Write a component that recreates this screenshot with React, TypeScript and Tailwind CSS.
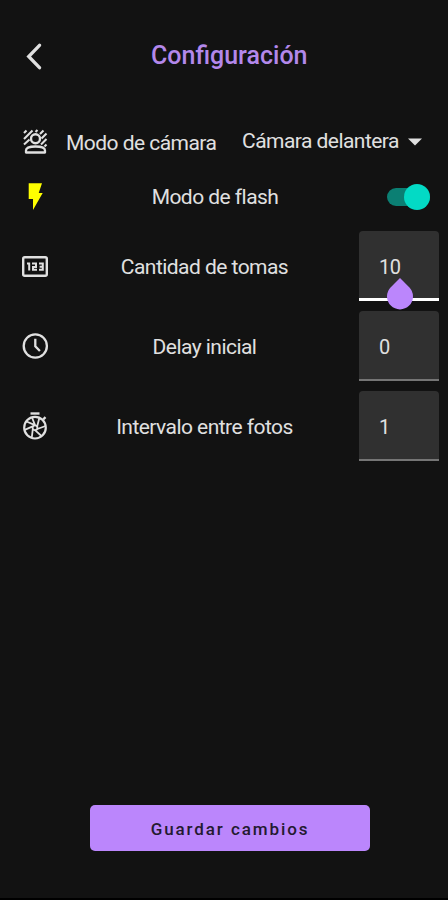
import type { ReactNode } from 'react';

const stroke = { fill: 'none', stroke: '#e0e0e0' } as const;

function BackIcon() {
  return (
    <svg className="block" width="18" height="28" viewBox="0 0 18 28" {...stroke} strokeWidth="3.3" strokeLinecap="round" strokeLinejoin="miter">
      <path d="M14.5 3.3 3.7 14.5 14.5 25.7" />
    </svg>
  );
}

function CameraModeIcon() {
  return (
    <svg className="block" width="26" height="28" viewBox="0 0 26 28" {...stroke} strokeWidth="2.1">
      <path d="M2 5 4.5 2.5M2 11 10.5 2.5M2 16.5 7.5 11.5M13.5 4 15.5 2M18 6 21.5 2.5M19.5 10.5 24.5 5.5M19 16.5 24.5 11M22.5 18.5 24.5 16.5" />
      <circle cx="13.5" cy="10.7" r="4.5" strokeWidth="2.4" />
      <path d="M4 24.5v-2c0-2.8 4.5-4 9.5-4s9.5 1.2 9.5 4v2Z" strokeWidth="2.3" strokeLinejoin="round" />
    </svg>
  );
}

function FlashIcon() {
  return (
    <svg className="block" width="26" height="30" viewBox="0 0 26 30" fill="#ffff00">
      <path d="M6.7 1.2H20L16.7 11H20.7L11 28V17H6.7Z" />
    </svg>
  );
}

function NumbersIcon() {
  return (
    <svg className="mt-0.5 block" width="28" height="24" viewBox="0 0 28 24" {...stroke} strokeWidth="2">
      <rect x="2.2" y="2.2" width="23.6" height="18.6" rx="1.5" strokeWidth="2.4" />
      <path d="M6 8.4h2.2V15.6M11 8.4h4V12h-3v2.8h4M18 8.4h3.8v6.4H18M18.6 11.8h3" />
    </svg>
  );
}

function ClockIcon() {
  return (
    <svg className="block" width="28" height="28" viewBox="0 0 28 28" {...stroke} strokeWidth="2.3">
      <circle cx="14.3" cy="14" r="11.6" />
      <path d="M14.3 6.8v7.4l4.6 4.8" />
    </svg>
  );
}

function ShutterIcon() {
  return (
    <svg className="block" width="28" height="30" viewBox="0 0 28 30" {...stroke} strokeWidth="1.8">
      <path d="M9.5 2.5h9" strokeWidth="2.4" />
      <path d="m22.2 8.5 2.3-2.3" strokeWidth="2.4" />
      <circle cx="14" cy="16.7" r="10.8" strokeWidth="2.2" />
      <path d="M14 14.2 11 6.5M16.2 15.4 18.3 7M16.3 18 24.5 15M14 19.2 20.5 25M11.8 18 10.8 26.5M11.6 15.4 3.8 18.8M14 14.2 5.5 10.5" strokeWidth="1.8" />
      <circle cx="14" cy="16.7" r="2.4" strokeWidth="1.8" />
    </svg>
  );
}

function IconCell({ children }: { children: ReactNode }) {
  return <div className="flex w-[50px] shrink-0 justify-center pl-5">{children}</div>;
}

function NumberRow({ icon, label, value, focused = false }: { icon: ReactNode; label: string; value: string; focused?: boolean }) {
  return (
    <div className="flex h-[70px] items-center pr-[9px]">
      <IconCell>{icon}</IconCell>
      <div className="flex-1 whitespace-nowrap pt-0.5 text-center">{label}</div>
      <div
        className={
          focused
            ? 'relative flex h-[70px] w-20 items-center rounded-t-[4px] border-b-[3px] border-white bg-[#303030] pl-5 pt-[5px] text-[20px]'
            : 'relative flex h-[70px] w-20 items-center rounded-t-[4px] border-b-2 border-[#757575] bg-[#303030] pl-5 pt-1 text-[20px]'
        }
      >
        {value}
        {focused && (
          <svg className="absolute left-[27px] top-[46px] z-10" width="28" height="34" viewBox="0 0 28 34" fill="#bb86fc">
            <path d="M14 1 23.2 10.2A13 13 0 1 1 4.8 10.2Z" />
          </svg>
        )}
      </div>
    </div>
  );
}

export default function App() {
  return (
    <div className="flex h-[900px] w-[448px] flex-col border-b-2 border-black bg-[#121212] font-['Roboto',sans-serif] text-[21px] leading-7 tracking-[-0.54px] text-[#e0e0e0]">
      <header className="flex h-[112px] items-center pl-[25px]">
        <BackIcon />
        <h1 className="ml-[108px] whitespace-nowrap text-[25px] font-medium tracking-normal text-[#b388eb]">Configuración</h1>
      </header>

      <div className="flex h-[60px] items-center">
        <IconCell><CameraModeIcon /></IconCell>
        <div className="ml-4 w-44 whitespace-nowrap pt-px">Modo de cámara</div>
        <div className="flex items-center whitespace-nowrap">
          <span className="-mt-0.5">Cámara delantera</span>
          <svg className="ml-[9px] block" width="14" height="8" viewBox="0 0 14 8" fill="#e0e0e0"><path d="M0 .5h14L7 7.5Z" /></svg>
        </div>
      </div>

      <div className="flex h-[50px] items-center">
        <IconCell><FlashIcon /></IconCell>
        <div className="w-[330px] whitespace-nowrap text-center">Modo de flash</div>
        <div className="ml-[7px] flex h-[18px] w-[43px] items-center justify-end rounded-full bg-[#0b7f73]">
          <div className="h-[26px] w-[26px] shrink-0 rounded-full bg-[#03dac5]" />
        </div>
      </div>

      <main className="flex flex-col gap-2.5 pt-[9px]">
        <NumberRow icon={<NumbersIcon />} label="Cantidad de tomas" value="10" focused />
        <NumberRow icon={<ClockIcon />} label="Delay inicial" value="0" />
        <NumberRow icon={<ShutterIcon />} label="Intervalo entre fotos" value="1" />
      </main>

      <button className="mb-[47px] ml-[90px] mt-auto h-[46px] w-[280px] rounded-[5px] bg-[#bb86fc] pt-0.5 text-[17px] font-medium tracking-[1.9px] text-[#241a30]">
        Guardar cambios
      </button>
    </div>
  );
}
